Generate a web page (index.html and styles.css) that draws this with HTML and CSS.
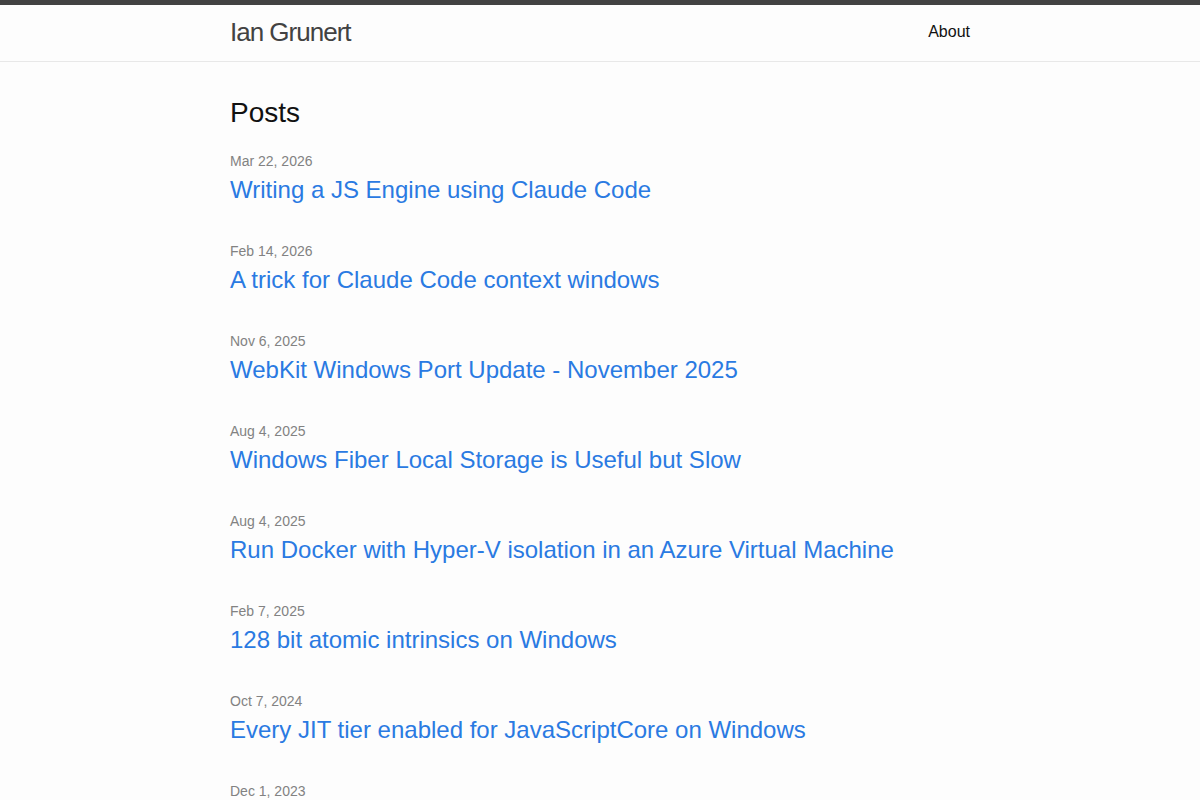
FILE: index.html
```html
<!DOCTYPE html>
<html lang="en">
<head>
<meta charset="utf-8">
<title>Ian Grunert</title>
<link rel="stylesheet" href="styles.css">
</head>
<body>
<header class="site-header">
  <div class="wrapper header-inner">
    <a class="site-title" href="#">Ian Grunert</a>
    <nav class="site-nav">
      <a class="page-link" href="#">About</a>
    </nav>
  </div>
</header>
<main class="page-content">
  <div class="wrapper">
    <h2 class="post-list-heading">Posts</h2>
    <ul class="post-list">
      <li class="post-item">
        <span class="post-meta">Mar 22, 2026</span>
        <h3 class="post-title"><a class="post-link" href="#">Writing a JS Engine using Claude Code</a></h3>
      </li>
      <li class="post-item">
        <span class="post-meta">Feb 14, 2026</span>
        <h3 class="post-title"><a class="post-link" href="#">A trick for Claude Code context windows</a></h3>
      </li>
      <li class="post-item">
        <span class="post-meta">Nov 6, 2025</span>
        <h3 class="post-title"><a class="post-link" href="#">WebKit Windows Port Update - November 2025</a></h3>
      </li>
      <li class="post-item">
        <span class="post-meta">Aug 4, 2025</span>
        <h3 class="post-title"><a class="post-link" href="#">Windows Fiber Local Storage is Useful but Slow</a></h3>
      </li>
      <li class="post-item">
        <span class="post-meta">Aug 4, 2025</span>
        <h3 class="post-title"><a class="post-link" href="#">Run Docker with Hyper-V isolation in an Azure Virtual Machine</a></h3>
      </li>
      <li class="post-item">
        <span class="post-meta">Feb 7, 2025</span>
        <h3 class="post-title"><a class="post-link" href="#">128 bit atomic intrinsics on Windows</a></h3>
      </li>
      <li class="post-item">
        <span class="post-meta">Oct 7, 2024</span>
        <h3 class="post-title"><a class="post-link" href="#">Every JIT tier enabled for JavaScriptCore on Windows</a></h3>
      </li>
      <li class="post-item">
        <span class="post-meta">Dec 1, 2023</span>
        <h3 class="post-title"><a class="post-link" href="#">WebKit on Windows</a></h3>
      </li>
    </ul>
  </div>
</main>
</body>
</html>
```
FILE: styles.css
```css
html, body {
  margin: 0;
  padding: 0;
}
body {
  background: #fdfdfd;
  color: #111111;
  font-family: "Liberation Sans", Arial, Helvetica, sans-serif;
  font-size: 16px;
  line-height: 1.5;
}
a {
  text-decoration: none;
}
.wrapper {
  max-width: 740px;
  margin: 0 auto;
  padding: 0 30px;
}
.site-header {
  border-top: 5px solid #424242;
  border-bottom: 1px solid #e8e8e8;
  min-height: 56px;
  box-sizing: border-box;
  height: 62px;
}
.header-inner {
  display: flex;
  justify-content: space-between;
  align-items: flex-start;
}
.site-title {
  font-size: 26px;
  font-weight: 300;
  letter-spacing: -1px;
  line-height: 54px;
  color: #424242;
}
.site-nav {
  line-height: 54px;
}
.page-link {
  color: #111111;
  font-size: 16px;
}
.page-content {
  padding: 30px 0;
}
.post-list-heading {
  font-size: 28px;
  font-weight: 400;
  line-height: 42px;
  margin: 0 0 17px;
}
.post-list {
  list-style: none;
  margin: 0;
  padding: 0;
}
.post-item {
  margin-bottom: 33px;
}
.post-meta {
  display: block;
  font-size: 14px;
  line-height: 21px;
  color: #828282;
}
.post-title {
  margin: 0;
  font-size: 24px;
  font-weight: 400;
  line-height: 36px;
}
.post-link {
  display: block;
  color: #2a7ae2;
}
```
